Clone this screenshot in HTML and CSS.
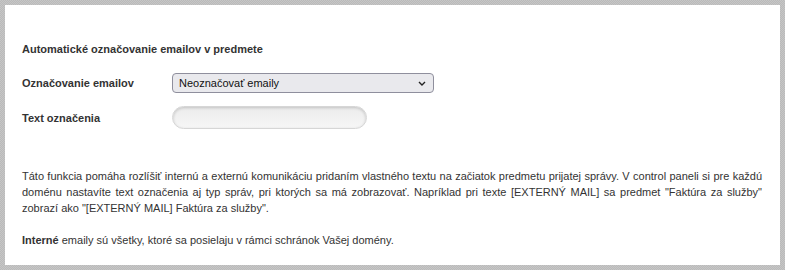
FILE: index.html
```html
<!DOCTYPE html>
<html>
<head>
  <meta charset="utf-8">
  <title>Označovanie emailov</title>
  <link rel="stylesheet" href="styles.css">
</head>
<body>
  <div class="frame">
    <div class="panel">
      <h3 class="section-title">Automatické označovanie emailov v predmete</h3>

      <div class="form-row">
        <label class="form-label" for="tagMode">Označovanie emailov</label>
        <div class="select-wrap">
          <select id="tagMode" class="form-select">
            <option>Neoznačovať emaily</option>
            <option>Označovať externé emaily</option>
            <option>Označovať interné emaily</option>
          </select>
          <svg class="select-arrow" width="8" height="5" viewBox="0 0 8 5">
            <path d="M1 1 L4 4 L7 1" fill="none" stroke="#222" stroke-width="1.4"/>
          </svg>
        </div>
      </div>

      <div class="form-row row-input">
        <label class="form-label" for="tagText">Text označenia</label>
        <input id="tagText" class="form-input" type="text">
      </div>

      <p class="info">Táto funkcia pomáha rozlíšiť internú a externú komunikáciu pridaním vlastného textu na začiatok predmetu prijatej správy. V control paneli si pre každú doménu nastavíte text označenia aj typ správ, pri ktorých sa má zobrazovať. Napríklad pri texte [EXTERNÝ MAIL] sa predmet "Faktúra za služby" zobrazí ako "[EXTERNÝ MAIL] Faktúra za služby".</p>

      <p class="info"><strong>Interné</strong> emaily sú všetky, ktoré sa posielaju v rámci schránok Vašej domény.</p>
    </div>
  </div>
</body>
</html>
```

FILE: styles.css
```css
html, body {
  margin: 0;
  padding: 0;
}

body {
  font-family: "Liberation Sans", Arial, sans-serif;
  font-size: 11px;
  line-height: 16px;
  color: #333;
}

.frame {
  width: 785px;
  height: 270px;
  box-sizing: border-box;
  padding: 5px;
  background: repeating-conic-gradient(#bababa 0 25%, #c6c6c6 0 50%) 0 0 / 2px 2px;
}

.panel {
  height: 100%;
  box-sizing: border-box;
  padding: 36px 18px 0 17px;
  background: #fff;
}

.section-title {
  margin: 0 0 16px 0;
  font-size: 11px;
  font-weight: bold;
}

.form-row {
  display: flex;
  align-items: center;
}

.row-input {
  margin-top: 13px;
}

.form-label {
  width: 150px;
  font-weight: bold;
}

.select-wrap {
  position: relative;
}

.form-select {
  -webkit-appearance: none;
  appearance: none;
  width: 262px;
  height: 20px;
  margin: 0;
  padding: 0 20px 0 6px;
  border: 1px solid #8f8f9d;
  border-radius: 4px;
  background: #e9e9ed;
  font-family: inherit;
  font-size: 11px;
  color: #111;
  outline: none;
}

.select-arrow {
  position: absolute;
  right: 8px;
  top: 8px;
  pointer-events: none;
}

.form-input {
  width: 195px;
  height: 23px;
  margin: 0;
  padding: 0 10px;
  box-sizing: border-box;
  border: 1px solid #d6d6d6;
  border-radius: 12px;
  background: linear-gradient(#ececec, #f6f6f6);
  box-shadow: inset 0 1px 3px rgba(0, 0, 0, 0.18);
  font-family: inherit;
  font-size: 11px;
  outline: none;
}

.info {
  margin: 39px 0 0 0;
  text-align: justify;
}

.info + .info {
  margin-top: 16px;
}
```
